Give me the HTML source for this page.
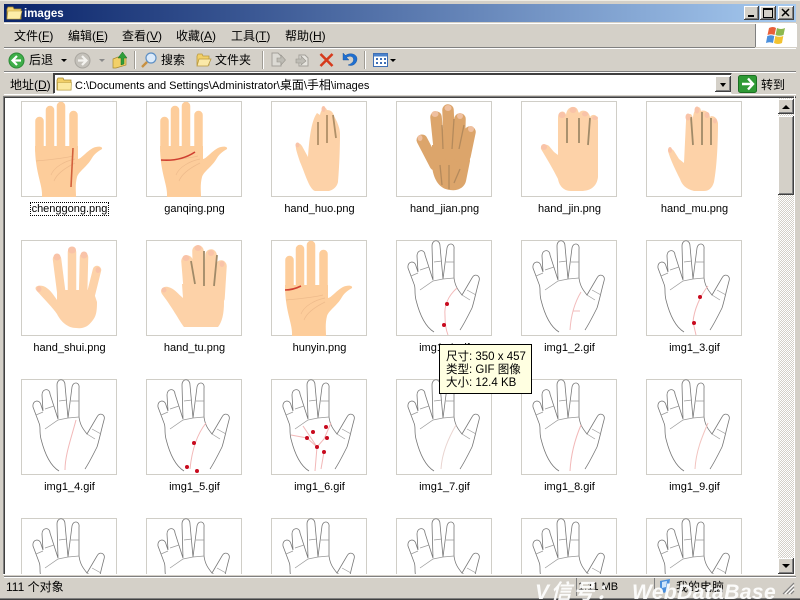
<!DOCTYPE html>
<html><head><meta charset="utf-8"><title>images</title>
<style>
html,body{margin:0;padding:0;width:800px;height:600px;overflow:hidden;background:#d4d0c8}
body{position:relative;font:12px/14px "Liberation Sans","WenQuanYi Zen Hei","Noto Sans CJK SC",sans-serif;color:#000}
div,span.a,svg.a{position:absolute}
.t{white-space:nowrap}
.l{width:125px;text-align:center;white-space:nowrap;height:14px;font-size:11px}
.sep{width:1px;background:#a09c94;border-right:1px solid #fff;top:51px;height:18px}
.btn{background:#d4d0c8;box-shadow:inset -1px -1px 0 #404040,inset 1px 1px 0 #fff,inset -2px -2px 0 #808080}
u{text-decoration:underline}
</style></head><body>
<!-- frame -->
<div style="left:0;top:0;width:800px;height:600px;background:#d4d0c8;overflow:hidden"></div>
<div style="left:0;top:0;width:800px;height:1px;background:#efece4"></div>
<div style="left:4px;top:4px;width:792px;height:18px;background:linear-gradient(90deg,#0a246a 0%,#a6caf0 100%)"></div>
<svg class="a" style="left:6px;top:6px" width="17" height="14" viewBox="0 0 17 14"><path d="M1 3 L2 1 L7 1 L8 3 L15 3 L15 13 L1 13Z" fill="#f7d774" stroke="#a88a30" stroke-width=".8"/><path d="M2 5 L16 5 L14 13 L1 13Z" fill="#fdeea8" stroke="#b89a3a" stroke-width=".6"/></svg>
<div class="t" style="left:24px;top:7px;color:#fff;font-weight:bold;font-size:11.5px">images</div>
<div class="btn" style="left:744px;top:6px;width:15px;height:14px"></div>
<div style="left:748px;top:15px;width:6px;height:2px;background:#000"></div>
<div class="btn" style="left:760px;top:6px;width:16px;height:14px"></div>
<div style="left:763px;top:8px;width:8px;height:7px;border:1px solid #000;border-top-width:2px"></div>
<div class="btn" style="left:778px;top:6px;width:16px;height:14px"></div>
<svg class="a" style="left:781px;top:8px" width="10" height="9"><path d="M1 1 L8 8 M8 1 L1 8" stroke="#000" stroke-width="1.5"/></svg>

<!-- separators -->
<div style="left:4px;top:23px;width:792px;height:1px;background:#fff"></div>
<div style="left:4px;top:47px;width:751px;height:1px;background:#808080"></div>
<div style="left:4px;top:48px;width:792px;height:1px;background:#fff"></div>
<div style="left:4px;top:71px;width:792px;height:1px;background:#808080"></div>
<div style="left:4px;top:72px;width:792px;height:1px;background:#fff"></div>
<div style="left:4px;top:94px;width:792px;height:1px;background:#fff"></div>

<!-- menu -->
<div class="t" style="left:14px;top:29px">文件(<u>F</u>)</div>
<div class="t" style="left:68px;top:29px">编辑(<u>E</u>)</div>
<div class="t" style="left:122px;top:29px">查看(<u>V</u>)</div>
<div class="t" style="left:176px;top:29px">收藏(<u>A</u>)</div>
<div class="t" style="left:231px;top:29px">工具(<u>T</u>)</div>
<div class="t" style="left:285px;top:29px">帮助(<u>H</u>)</div>
<div style="left:755px;top:24px;width:41px;height:23px;background:#fff;border-left:1px solid #808080"></div>
<svg class="a" style="left:765px;top:26px" width="22" height="20" viewBox="0 0 22 20"><path d="M4 2 Q8 0 11 2 L9.5 9 Q6 7.5 2.5 9Z" fill="#e8603a"/><path d="M12 2 Q16 4 20 2 L18.5 9 Q14.5 10.5 10.5 9Z" fill="#8cb850"/><path d="M2.3 10 Q6 8.5 9.3 10 L8 17 Q4.5 15.5 1 17Z" fill="#4a8fdc"/><path d="M10.3 10 Q14.5 11.5 18.3 10 L17 17 Q13 19 9 17Z" fill="#f2c230"/></svg>

<!-- toolbar -->
<svg class="a" style="left:8px;top:52px" width="17" height="17" viewBox="0 0 17 17"><circle cx="8.5" cy="8.5" r="7.5" fill="#3fae49" stroke="#2c8a36"/><path d="M9 4 L4.5 8.5 L9 13 M5 8.5 L13 8.5" stroke="#fff" stroke-width="2.2" fill="none"/></svg>
<div class="t" style="left:29px;top:53px">后退</div>
<div style="left:61px;top:59px;width:0;height:0;border:3px solid transparent;border-top:3px solid #000;border-bottom:0"></div>
<svg class="a" style="left:74px;top:52px" width="17" height="17" viewBox="0 0 17 17"><circle cx="8.5" cy="8.5" r="7.5" fill="#c4c1ba" stroke="#a8a59e"/><path d="M8 4 L12.5 8.5 L8 13 M12 8.5 L4 8.5" stroke="#f4f3ef" stroke-width="2.2" fill="none"/></svg>
<div style="left:99px;top:59px;width:0;height:0;border:3px solid transparent;border-top:3px solid #8a8a8a;border-bottom:0"></div>
<svg class="a" style="left:112px;top:51px" width="16" height="18" viewBox="0 0 16 18"><path d="M1 8 L6 6 L14 6 L14 14 L4 17 L1 17Z" fill="#f2d068" stroke="#a88a30" stroke-width=".7"/><path d="M9 14 L9 7 L6 7 L10.5 1 L15 7 L12 7 L12 13Z" fill="#2f9e3a" stroke="#1c7026" stroke-width=".5"/></svg>
<div class="sep" style="left:134px"></div>
<svg class="a" style="left:140px;top:51px" width="18" height="18" viewBox="0 0 18 18"><circle cx="11" cy="7" r="5" fill="#dbeafa" stroke="#5d8fc4" stroke-width="1.2"/><path d="M7 11 L2 16" stroke="#c89040" stroke-width="2.4"/></svg>
<div class="t" style="left:161px;top:53px">搜索</div>
<svg class="a" style="left:196px;top:53px" width="16" height="14" viewBox="0 0 16 14"><path d="M1 3 L2 1 L6 1 L7 3 L13 3 L13 12 L1 12Z" fill="#f2d068" stroke="#b8983e" stroke-width=".8"/><path d="M3 6 L15 6 L12 13 L1 13Z" fill="#fbe9a8" stroke="#b8983e" stroke-width=".8"/></svg>
<div class="t" style="left:215px;top:53px">文件夹</div>
<div class="sep" style="left:262px"></div>
<svg class="a" style="left:270px;top:52px" width="16" height="16" viewBox="0 0 16 16"><path d="M2 1 L8 1 L11 4 L11 14 L2 14Z" fill="#dcdad4" stroke="#a3a09a"/><path d="M7 6 L11 6 L11 3 L15.5 8 L11 13 L11 10 L7 10Z" fill="#bebcb5" stroke="#96938c" stroke-width=".6"/></svg>
<svg class="a" style="left:295px;top:52px" width="16" height="16" viewBox="0 0 16 16"><path d="M4 3 L10 3 L13 6 L13 14 L4 14Z" fill="#e6e4de" stroke="#a3a09a"/><path d="M1 7 L6 7 L6 4 L11 9 L6 13 L6 11 L1 11Z" fill="#bebcb5" stroke="#96938c" stroke-width=".6"/></svg>
<svg class="a" style="left:319px;top:53px" width="15" height="14" viewBox="0 0 15 14"><path d="M1.5 1 L13.5 13 M13.5 1 L1.5 13" stroke="#d63a1c" stroke-width="2.6"/></svg>
<svg class="a" style="left:342px;top:52px" width="16" height="15" viewBox="0 0 16 15"><path d="M1 1 L1 8 L7 8 L4.5 5.5 C7 3.5 11 4 11.5 7 C12 10 9 12 6 13 C11 15 15 11 15 7 C15 2 8 0 3.5 3.5Z" fill="#1f6fd0" stroke="#134c98" stroke-width=".4"/></svg>
<div class="sep" style="left:364px"></div>
<svg class="a" style="left:373px;top:53px" width="15" height="14" viewBox="0 0 15 14"><rect x=".5" y=".5" width="14" height="13" fill="#fff" stroke="#3f6fb5"/><rect x="1" y="1" width="13" height="2.5" fill="#4a82cc"/><path d="M3 5h2v2H3zM7 5h2v2H7zM11 5h2v2h-2zM3 9h2v2H3zM7 9h2v2H7zM11 9h2v2h-2z" fill="#3f6fb5"/></svg>
<div style="left:390px;top:59px;width:0;height:0;border:3px solid transparent;border-top:3px solid #000;border-bottom:0"></div>

<!-- address bar -->
<div class="t" style="left:10px;top:78px">地址(<u>D</u>)</div>
<div style="left:53px;top:73px;width:677px;height:19px;background:#fff;border:1px solid;border-color:#404040 #d4d0c8 #fff #404040;box-shadow:inset 1px 1px 0 #404040"></div>
<svg class="a" style="left:56px;top:77px" width="17" height="14" viewBox="0 0 17 14"><path d="M1 3 L2 1 L7 1 L8 3 L15 3 L15 13 L1 13Z" fill="#f2d068" stroke="#a88a30" stroke-width=".8"/><path d="M1.5 5.5 L15.5 5.5 L15 13 L1.5 13Z" fill="#fbe9a0" stroke="#b89a3a" stroke-width=".6"/></svg>
<div class="t" style="left:75px;top:78px;font-size:11px">C:\Documents and Settings\Administrator\<span style="font-size:12px">桌面</span>\<span style="font-size:12px">手相</span>\images</div>
<div class="btn" style="left:715px;top:76px;width:16px;height:16px"></div>
<div style="left:720px;top:83px;width:0;height:0;border:3.5px solid transparent;border-top:4px solid #000;border-bottom:0"></div>
<svg class="a" style="left:738px;top:75px" width="19" height="18" viewBox="0 0 19 18"><rect x=".5" y=".5" width="18" height="17" rx="2" fill="#2f9a35" stroke="#1b6f22"/><path d="M10 3.5 L15 9 L10 14.5 M14 9 L4 9" stroke="#fff" stroke-width="2.4" fill="none"/></svg>
<div class="t" style="left:761px;top:78px">转到</div>

<!-- content -->
<div style="left:3px;top:96px;width:793px;height:1px;background:#808080"></div>
<div style="left:3px;top:97px;width:793px;height:1px;background:#404040"></div>
<div style="left:3px;top:96px;width:1px;height:479px;background:#808080"></div>
<div style="left:4px;top:97px;width:1px;height:478px;background:#404040"></div>
<div style="left:5px;top:98px;width:773px;height:476px;background:#fff;overflow:hidden">
<svg style="position:absolute;left:-5px;top:-98px" width="778" height="574" viewBox="0 0 778 574">
<defs>
<symbol id="P" viewBox="0 0 96 96" overflow="visible"><path d="M21 96 C22 84 14 72 14 45 L57 45 L57 58 C60 58 66 50 72 47 C76 45 82 45 81 48 C78 50 74 52 71 57 C66 66 58 70 56 76 C54 84 55 90 55 96Z" fill="#fdcd9b"/><path d="M18.500 50 L18.500 20 M29 50 L29 9 M40 50 L40 5 M52.500 50 L52.500 14" stroke="#fdcd9b" stroke-width="8.500" stroke-linecap="round" fill="none"/><path d="M15 60 C25 59 40 58 52 55 M30 74 C33 66 44 60 54 58 M33 80 C36 72 46 66 54 62" fill="none" stroke="#eebb8c" stroke-width=".7"/></symbol>
<symbol id="L" viewBox="0 0 96 96" overflow="visible"><path d="M38 92 C28 86 23 72 20 60 C18 52 20 48 18 44 L12 28 C11 21 19 20 20 26 L22 32 L21 16 C21 9 29 9 29 15 L37 40 L36 6 C36 -1 44 -1 44 6 L47 39 L51 8 C52 2 59 3 58 9 L58 38 C59 46 62 50 66 55 L76 38 C78 33 85 35 83 41 C80 52 78 62 76 68 C72 76 68 84 64 90" fill="none" stroke="#777" stroke-width=".8"/><path d="M15 36 L22 33 M24 30 L33 27 M38 22 L46 21 M50 22 L58 22 M24 50 L37 41 L47 39 L58 38 M71 50 L80 55 M66 55 L74 60" fill="none" stroke="#999" stroke-width=".7"/></symbol>
</defs>
<g fill="#fff" stroke="#d0cec7">
<rect x="21.500" y="101.500" width="95" height="95"/><rect x="146.500" y="101.500" width="95" height="95"/><rect x="271.500" y="101.500" width="95" height="95"/><rect x="396.500" y="101.500" width="95" height="95"/><rect x="521.500" y="101.500" width="95" height="95"/><rect x="646.500" y="101.500" width="95" height="95"/>
<rect x="21.500" y="240.500" width="95" height="95"/><rect x="146.500" y="240.500" width="95" height="95"/><rect x="271.500" y="240.500" width="95" height="95"/><rect x="396.500" y="240.500" width="95" height="95"/><rect x="521.500" y="240.500" width="95" height="95"/><rect x="646.500" y="240.500" width="95" height="95"/>
<rect x="21.500" y="379.500" width="95" height="95"/><rect x="146.500" y="379.500" width="95" height="95"/><rect x="271.500" y="379.500" width="95" height="95"/><rect x="396.500" y="379.500" width="95" height="95"/><rect x="521.500" y="379.500" width="95" height="95"/><rect x="646.500" y="379.500" width="95" height="95"/>
<rect x="21.500" y="518.500" width="95" height="95"/><rect x="146.500" y="518.500" width="95" height="95"/><rect x="271.500" y="518.500" width="95" height="95"/><rect x="396.500" y="518.500" width="95" height="95"/><rect x="521.500" y="518.500" width="95" height="95"/><rect x="646.500" y="518.500" width="95" height="95"/>
</g>
<!-- row 1 -->
<g transform="translate(21,101)"><use href="#P" width="96" height="96"/><path d="M52 47 L50 86" stroke="#d2603c" stroke-width="1.600" fill="none"/></g>
<g transform="translate(146,101)"><use href="#P" width="96" height="96"/><path d="M15 59 C28 60 40 57 49 51" stroke="#cf3f30" stroke-width="1.600" fill="none"/></g>
<g transform="translate(271,101)"><path d="M44 90 C38 88 34 72 29 61 C26 52 24 46 25 44 C27 41 29 42 31 45 L37 56 C38 40 40 20 46 12 L49 14 C50 8 54 4 56 9 C60 9 62 11 63 15 C67 22 69 28 69 33 C69 50 68 70 67 81 C66 86 62 89 58 90Z" fill="#fdd2a8"/><path d="M47 21 L47 44 M56 14 L56 42 M62 14 L65 37" stroke="#b09068" stroke-width="1.800" fill="none"/><ellipse cx="26.500" cy="44" rx="2" ry="2.500" fill="#f9c3a8"/><ellipse cx="52.500" cy="8" rx="2" ry="3" fill="#f9c3a8"/></g>
<g transform="translate(396,101)"><path d="M36 44 L73 44 L74 60 L70 80 C68 88 60 90 54 89 C44 88 38 80 36 66Z" fill="#dca56b"/><path d="M40 16 L44 55 M52 9 L54 55 M64 18 L63 55 M74 31 L69 55" stroke="#dca56b" stroke-width="11.500" stroke-linecap="round" fill="none"/><path d="M26 39 L39 64" stroke="#dca56b" stroke-width="11" stroke-linecap="round"/><path d="M46 24 L47 48 M58 18 L56 48 M68 24 L63 48 M44 64 L46 84 M53 64 L53 88 M64 68 L58 82" stroke="#b48a5c" stroke-width="1.300" fill="none"/><ellipse cx="39" cy="13" rx="3.500" ry="3" fill="#efc0a0"/><ellipse cx="52" cy="7" rx="3.500" ry="3" fill="#efc0a0"/><ellipse cx="64" cy="15" rx="3" ry="3" fill="#efc0a0"/><ellipse cx="75" cy="28" rx="3" ry="3" fill="#efc0a0"/><ellipse cx="24" cy="37" rx="2.500" ry="3" fill="#efc0a0"/></g>
<g transform="translate(521,101)"><path d="M37 54 L37 17 C37 9 44 9 45 14 C46 4 56 4 57 10 L58 12 C60 8 68 9 69 16 C72 12 77 14 77 20 L77 76 C76 85 70 90 60 90 L50 90 C42 90 38 84 37 78 C32 68 26 58 20 48 C19 44 24 42 28 45 L33 51Z" fill="#fdd2a8"/><path d="M46 17 L46 42 M58 17 L58 42 M69 17 L67 44" stroke="#a08a68" stroke-width="1.800" fill="none"/><ellipse cx="41" cy="14" rx="3.500" ry="3" fill="#f9c3a8"/><ellipse cx="52" cy="9" rx="3.500" ry="3" fill="#f9c3a8"/><ellipse cx="64" cy="13" rx="3" ry="2.500" fill="#f9c3a8"/><ellipse cx="74" cy="17" rx="3" ry="2" fill="#f9c3a8"/><ellipse cx="23" cy="46" rx="3" ry="3" fill="#f9c3a8"/></g>
<g transform="translate(646,101)"><path d="M38 62 L40 20 C40 12 46 10 47 18 C47 8 54 2 55 10 C56 9 63 9 64 16 C65 14 71 15 72 22 C72 40 71 65 68 81 C66 88 62 90 58 90 L48 90 C40 88 36 84 34 78 C30 70 24 58 22 50 C22 46 26 47 28 50 L33 58Z" fill="#fdd2a8"/><path d="M45 16 L47 44 M56 11 L56 44 M65 17 L65 44" stroke="#a08a68" stroke-width="1.800" fill="none"/><ellipse cx="42" cy="16" rx="2.500" ry="3.500" fill="#f9c3a8"/><ellipse cx="51" cy="9" rx="2.500" ry="3.500" fill="#f9c3a8"/><ellipse cx="61" cy="14" rx="2.500" ry="3" fill="#f9c3a8"/><ellipse cx="69" cy="20" rx="2" ry="2.500" fill="#f9c3a8"/><ellipse cx="24" cy="49" rx="2" ry="3" fill="#f9c3a8"/></g>
<!-- row 2 -->
<g transform="translate(21,240)"><path d="M36 50 L72 50 L76 62 C76 72 75 76 72 80 C67 87 62 89 55 88 C47 88 40 82 36 74 C32 68 24 60 15 50 C13 46 18 45 22 46 C28 48 32 54 36 60Z" fill="#fdd2a8"/><path d="M36 19 L41 58 M51 12 L51 58 M63 17 L62 58 M76 30 L69 58" stroke="#fdd2a8" stroke-width="8.500" stroke-linecap="round" fill="none"/><ellipse cx="36" cy="17" rx="3.500" ry="3.500" fill="#f9c3a8"/><ellipse cx="51" cy="10" rx="4" ry="3.500" fill="#f9c3a8"/><ellipse cx="63" cy="15" rx="3.500" ry="3.500" fill="#f9c3a8"/><ellipse cx="77" cy="30" rx="2.500" ry="3" fill="#f9c3a8"/><ellipse cx="18" cy="49" rx="2.500" ry="3" fill="#f9c3a8"/></g>
<g transform="translate(146,240)"><path d="M36 44 L78 44 L78 62 C78 74 76 82 72 87 L38 87 C34 82 28 70 16 54 C13 49 18 46 22 47 C28 48 32 54 37 58Z" fill="#fdd2a8"/><path d="M41 21 L44 58 M52 11 L53 58 M65 15 L63 58 M75 26 L73 58" stroke="#fdd2a8" stroke-width="11.500" stroke-linecap="round" fill="none"/><path d="M45 21 L49 44 M58 11 L58 46 M71 15 L68 46" stroke="#a08a68" stroke-width="1.800" fill="none"/><ellipse cx="40" cy="18" rx="3.500" ry="3" fill="#f9c3a8"/><ellipse cx="52" cy="8" rx="3.500" ry="3" fill="#f9c3a8"/><ellipse cx="65" cy="13" rx="3" ry="3" fill="#f9c3a8"/><ellipse cx="76" cy="24" rx="2.500" ry="3" fill="#f9c3a8"/><ellipse cx="18" cy="50" rx="2.500" ry="2.500" fill="#f9c3a8"/></g>
<g transform="translate(271,240)"><use href="#P" width="96" height="96"/><path d="M14 50 C20 50 26 48 30 46" stroke="#cf3f30" stroke-width="1.600" fill="none"/></g>
<g transform="translate(396,240)"><use href="#L" width="96" height="96"/><path d="M61 48 C52 56 48 66 49 76 C49 84 50 90 52 95" stroke="#f2b8b8" fill="none"/><circle cx="51" cy="64" r="2" fill="#c80a1e"/><circle cx="48" cy="85" r="2" fill="#c80a1e"/></g>
<g transform="translate(521,240)"><use href="#L" width="96" height="96"/><path d="M60 52 C54 62 50 74 49 90 M52 71 L59 71" stroke="#f2bcbc" fill="none"/></g>
<g transform="translate(646,240)"><use href="#L" width="96" height="96"/><path d="M62 46 C54 56 48 70 47 82 L50 95" stroke="#f2b8b8" fill="none"/><circle cx="54" cy="57" r="2" fill="#c80a1e"/><circle cx="48" cy="83" r="2" fill="#c80a1e"/></g>
<!-- row 3 -->
<g transform="translate(21,379)"><use href="#L" width="96" height="96"/><path d="M55 41 C50 60 44 76 44 91" stroke="#f2b8b8" fill="none"/></g>
<g transform="translate(146,379)"><use href="#L" width="96" height="96"/><path d="M60 44 C52 54 46 70 44 90" stroke="#f2b8b8" fill="none"/><circle cx="48" cy="64" r="2" fill="#c80a1e"/><circle cx="41" cy="88" r="2" fill="#c80a1e"/><circle cx="51" cy="92" r="2" fill="#c80a1e"/></g>
<g transform="translate(271,379)"><use href="#L" width="96" height="96"/><path d="M32 47 L46 68 L44 92 M20 56 L36 59 L46 68 M60 44 L53 60 L46 68 M53 73 L50 90" stroke="#f2b8b8" fill="none"/><circle cx="42" cy="53" r="2" fill="#c80a1e"/><circle cx="55" cy="48" r="2" fill="#c80a1e"/><circle cx="36" cy="59" r="2" fill="#c80a1e"/><circle cx="56" cy="59" r="2" fill="#c80a1e"/><circle cx="46" cy="68" r="2" fill="#c80a1e"/><circle cx="53" cy="73" r="2" fill="#c80a1e"/></g>
<g transform="translate(396,379)"><use href="#L" width="96" height="96"/><path d="M60 46 C52 60 46 74 45 90" stroke="#e9d4d0" fill="none"/></g>
<g transform="translate(521,379)"><use href="#L" width="96" height="96"/><path d="M60 46 C54 60 50 74 49 92" stroke="#f2b8b8" fill="none"/></g>
<g transform="translate(646,379)"><use href="#L" width="96" height="96"/><path d="M62 44 C56 58 50 72 49 90" stroke="#f2c4c0" fill="none"/></g>
<!-- row 4 -->
<use href="#L" x="21" y="518" width="96" height="96"/><use href="#L" x="146" y="518" width="96" height="96"/><use href="#L" x="271" y="518" width="96" height="96"/><use href="#L" x="396" y="518" width="96" height="96"/><use href="#L" x="521" y="518" width="96" height="96"/><use href="#L" x="646" y="518" width="96" height="96"/>
</svg>
</div>

<!-- labels -->
<div class="l" style="left:7px;top:202px"><span style="outline:1px dotted #000;padding:0 1px">chenggong.png</span></div>
<div class="l" style="left:132px;top:202px">ganqing.png</div>
<div class="l" style="left:257px;top:202px">hand_huo.png</div>
<div class="l" style="left:382px;top:202px">hand_jian.png</div>
<div class="l" style="left:507px;top:202px">hand_jin.png</div>
<div class="l" style="left:632px;top:202px">hand_mu.png</div>
<div class="l" style="left:7px;top:341px">hand_shui.png</div>
<div class="l" style="left:132px;top:341px">hand_tu.png</div>
<div class="l" style="left:257px;top:341px">hunyin.png</div>
<div class="l" style="left:382px;top:341px">img1_1.gif</div>
<div class="l" style="left:507px;top:341px">img1_2.gif</div>
<div class="l" style="left:632px;top:341px">img1_3.gif</div>
<div class="l" style="left:7px;top:480px">img1_4.gif</div>
<div class="l" style="left:132px;top:480px">img1_5.gif</div>
<div class="l" style="left:257px;top:480px">img1_6.gif</div>
<div class="l" style="left:382px;top:480px">img1_7.gif</div>
<div class="l" style="left:507px;top:480px">img1_8.gif</div>
<div class="l" style="left:632px;top:480px">img1_9.gif</div>

<!-- scrollbar -->
<div style="left:778px;top:98px;width:16px;height:476px;background-color:#f1efea;background-image:repeating-conic-gradient(#d4d0c8 0 25%,#fff 0 50%);background-size:2px 2px"></div>
<div class="btn" style="left:778px;top:99px;width:16px;height:15px"></div>
<div style="left:782px;top:105px;width:0;height:0;border:4px solid transparent;border-bottom:4px solid #000;border-top:0"></div>
<div class="btn" style="left:778px;top:116px;width:16px;height:79px"></div>
<div class="btn" style="left:778px;top:558px;width:16px;height:16px"></div>
<div style="left:782px;top:564px;width:0;height:0;border:4px solid transparent;border-top:4px solid #000;border-bottom:0"></div>
<div style="left:794px;top:96px;width:1px;height:479px;background:#fff"></div>
<div style="left:3px;top:574px;width:792px;height:1px;background:#fff"></div>

<!-- tooltip -->
<div style="left:439px;top:344px;width:91px;height:48px;background:#ffffe1;border:1px solid #000"></div>
<div class="t" style="left:446px;top:351px;font-size:11.5px;line-height:13px">尺寸: 350 x 457<br>类型: GIF 图像<br>大小: 12.4 KB</div>

<!-- status -->
<div style="left:4px;top:576px;width:792px;height:1px;background:#808080"></div>
<div style="left:4px;top:577px;width:792px;height:1px;background:#fff"></div>
<div class="t" style="left:6px;top:580px">111 个对象</div>
<div style="left:576px;top:578px;width:1px;height:18px;background:#808080"></div>
<div style="left:654px;top:578px;width:1px;height:18px;background:#808080"></div>
<div class="t" style="left:578px;top:580px;font-size:11px">1.11 MB</div>
<svg class="a" style="left:658px;top:579px" width="14" height="15" viewBox="0 0 14 15"><path d="M2 2 L12 0 L10 12 L6 14 L2 10Z" fill="#4a8fdc"/><path d="M4 3 L9 2 L8 8 L4 9Z" fill="#cfe5fb"/></svg>
<div class="t" style="left:676px;top:580px">我的电脑</div>
<svg class="a" style="left:782px;top:582px" width="13" height="13"><path d="M12 1 L1 12 M12 5 L5 12 M12 9 L9 12" stroke="#808080" stroke-width="1.200"/><path d="M12 3 L3 12 M12 7 L7 12" stroke="#fff"/></svg>
<div style="left:0;top:598px;width:800px;height:1px;background:#808080"></div>
<div style="left:0;top:599px;width:800px;height:1px;background:#404040"></div>
<!-- watermark -->
<div class="t" style="left:535px;top:579px;width:70px;height:21px;overflow:hidden;color:#fff;opacity:.92;font:italic bold 21px/28px 'Liberation Sans','Noto Sans CJK SC',sans-serif;letter-spacing:1.600px">V信号：</div>
<div class="t" style="left:632px;top:579px;width:150px;height:21px;overflow:hidden;color:#fff;opacity:.92;font:italic bold 21px/28px 'Liberation Sans',sans-serif;letter-spacing:.4px">WebDataBase</div>
</body></html>
